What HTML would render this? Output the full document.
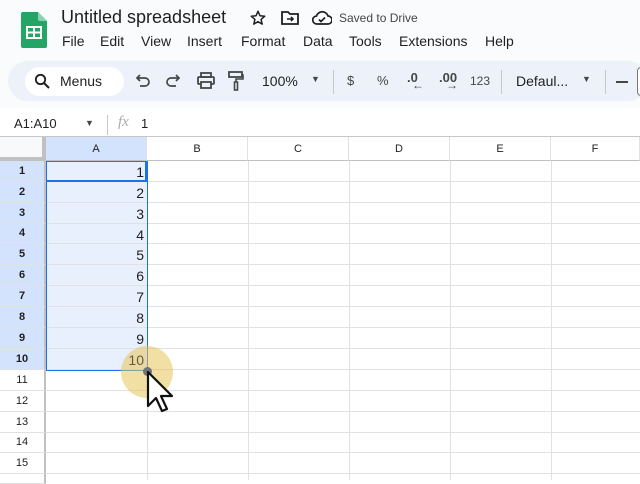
<!DOCTYPE html>
<html><head><meta charset="utf-8"><style>
*{margin:0;padding:0;box-sizing:border-box}
body{width:640px;height:480px;overflow:hidden;background:#fff;font-family:"Liberation Sans",Arial,sans-serif;position:relative;color:#1f1f1f}
.abs{position:absolute}
.top{left:0;top:0;width:640px;height:108px;background:#f9fbfd}
.title{left:61px;top:7px;font-size:18px;color:#1f1f1f}
.menu{top:33px;font-size:14px;color:#1f1f1f}
.tb{left:8px;top:61px;width:640px;height:40px;background:#edf2fa;border-radius:20px}
.search{left:25px;top:67px;width:99px;height:29px;background:#fff;border-radius:15px}
.ti{top:72px;font-size:14px;color:#444746}
.sep{width:1px;height:24px;background:#c7c7c7;top:70px}
.ch{top:137px;height:24px;border-right:1px solid #e1e1e1;border-bottom:1px solid #c0c0c0;font-size:11px;text-align:center;line-height:24px;color:#1f1f1f;background:#fff}
.rh{left:0;width:46px;border-bottom:1px solid #e1e1e1;border-right:2px solid #c0c0c0;font-size:11px;text-align:center;color:#1f1f1f;font-weight:bold;background:#d3e3fd}
.row{left:46px;width:594px;border-bottom:1px solid #e1e1e1}
.vl{top:161px;width:1px;height:319px;background:#e1e1e1}
.num{left:46px;width:98px;text-align:right;font-size:14px;color:#1f1f1f}
</style></head><body>
<div class="abs top"></div>
<svg class="abs" style="left:21px;top:12px" width="26" height="36" viewBox="0 0 26 36"><path d="M2 0h15l9 9v25a2 2 0 0 1-2 2H2a2 2 0 0 1-2-2V2a2 2 0 0 1 2-2z" fill="#23a566"/><path d="M17 0v7a2 2 0 0 0 2 2h7z" fill="#8ed1b1"/><rect x="6" y="15" width="14" height="11" fill="none" stroke="#fff" stroke-width="2"/><line x1="6" y1="20.5" x2="20" y2="20.5" stroke="#fff" stroke-width="2"/><line x1="13" y1="15" x2="13" y2="26" stroke="#fff" stroke-width="2"/></svg>
<div class="abs title">Untitled spreadsheet</div>
<svg class="abs" style="left:249px;top:9px" width="18" height="18" viewBox="0 0 24 24"><path d="M12 3l2.6 6 6.4.6-4.9 4.3 1.5 6.3L12 16.9 6.4 20.2l1.5-6.3L3 9.6 9.4 9z" fill="none" stroke="#1f1f1f" stroke-width="2" stroke-linejoin="round"/></svg>
<svg class="abs" style="left:281px;top:10px" width="18" height="16" viewBox="0 0 18 16"><path d="M1 2h6l2 2h8v10H1z" fill="none" stroke="#1f1f1f" stroke-width="1.8"/><path d="M6 9h6M10 7l2 2-2 2" fill="none" stroke="#1f1f1f" stroke-width="1.6"/></svg>
<svg class="abs" style="left:312px;top:10px" width="20" height="16" viewBox="0 0 20 16"><path d="M5 14a4 4 0 0 1-.5-8A6 6 0 0 1 16 6a4 4 0 0 1 0 8z" fill="none" stroke="#1f1f1f" stroke-width="1.7"/><path d="M7 9.5l2 2 4-4" fill="none" stroke="#1f1f1f" stroke-width="1.7"/></svg>
<div class="abs" style="left:339px;top:11px;font-size:12px;color:#444746">Saved to Drive</div>
<div class="abs menu" style="left:62px">File</div>
<div class="abs menu" style="left:100px">Edit</div>
<div class="abs menu" style="left:141px">View</div>
<div class="abs menu" style="left:187px">Insert</div>
<div class="abs menu" style="left:241px">Format</div>
<div class="abs menu" style="left:303px">Data</div>
<div class="abs menu" style="left:349px">Tools</div>
<div class="abs menu" style="left:399px">Extensions</div>
<div class="abs menu" style="left:485px">Help</div>
<div class="abs tb"></div>
<div class="abs search"></div>
<svg class="abs" style="left:34px;top:73px" width="16" height="16" viewBox="0 0 16 16"><circle cx="6.5" cy="6.5" r="4.7" fill="none" stroke="#1f1f1f" stroke-width="1.8"/><line x1="10" y1="10" x2="15" y2="15" stroke="#1f1f1f" stroke-width="2"/></svg>
<div class="abs ti" style="left:60px;top:73px;color:#1f1f1f">Menus</div>
<svg class="abs" style="left:136px;top:74px" width="14" height="14" viewBox="0 0 14 14"><path d="M4 1L1 4l3 3M1 4h8a4 4 0 0 1 0 8H4" fill="none" stroke="#444746" stroke-width="1.7"/></svg>
<svg class="abs" style="left:166px;top:74px" width="14" height="14" viewBox="0 0 14 14"><path d="M10 1l3 3-3 3M13 4H5a4 4 0 0 0 0 8h5" fill="none" stroke="#444746" stroke-width="1.7"/></svg>
<svg class="abs" style="left:197px;top:72px" width="18" height="17" viewBox="0 0 18 17"><rect x="4" y="1" width="10" height="4" fill="none" stroke="#444746" stroke-width="1.8"/><rect x="1" y="5" width="16" height="7" rx="1" fill="none" stroke="#444746" stroke-width="1.8"/><rect x="4" y="10" width="10" height="6" fill="#edf2fa" stroke="#444746" stroke-width="1.8"/></svg>
<svg class="abs" style="left:228px;top:71px" width="16" height="20" viewBox="0 0 16 20"><rect x="1" y="1" width="13" height="5" fill="none" stroke="#444746" stroke-width="1.8"/><path d="M14 4h1v4H8v3" fill="none" stroke="#444746" stroke-width="1.6"/><rect x="6.5" y="11" width="3" height="8" fill="none" stroke="#444746" stroke-width="1.6"/></svg>
<div class="abs ti" style="left:262px;top:73px;color:#1f1f1f">100%</div>
<div class="abs ti" style="left:311px;top:74px;font-size:9px">&#9660;</div>
<div class="abs sep" style="left:333px"></div>
<div class="abs ti" style="left:347px;top:73px;font-size:13px">$</div>
<div class="abs ti" style="left:377px;top:73px;font-size:13px">%</div>
<div class="abs ti" style="left:407px;top:70px;font-size:13px;font-weight:bold">.0</div>
<div class="abs ti" style="left:412px;top:78px;font-size:12px;font-weight:bold">&#8592;</div>
<div class="abs ti" style="left:439px;top:70px;font-size:13px;font-weight:bold">.00</div>
<div class="abs ti" style="left:446px;top:78px;font-size:12px;font-weight:bold">&#8594;</div>
<div class="abs ti" style="left:470px;top:74px;font-size:12px">123</div>
<div class="abs sep" style="left:501px"></div>
<div class="abs ti" style="left:516px;top:73px;color:#1f1f1f">Defaul...</div>
<div class="abs ti" style="left:582px;top:74px;font-size:9px">&#9660;</div>
<div class="abs sep" style="left:605px"></div>
<div class="abs" style="left:616px;top:81px;width:12px;height:2px;background:#444746"></div>
<div class="abs" style="left:637px;top:67px;width:8px;height:29px;border:1px solid #747775;border-radius:4px;background:#fff"></div>
<div class="abs" style="left:14px;top:116px;font-size:13px">A1:A10</div>
<div class="abs" style="left:85px;top:118px;font-size:9px;color:#444746">&#9660;</div>
<div class="abs" style="left:107px;top:115px;width:1px;height:20px;background:#c7c7c7"></div>
<div class="abs" style="left:118px;top:114px;font-size:15px;font-style:italic;font-family:'Liberation Serif',serif;color:#aaa">fx</div>
<div class="abs" style="left:141px;top:116px;font-size:13px">1</div>
<div class="abs" style="left:0;top:136px;width:640px;height:1px;background:#c7c7c7"></div>
<div class="abs" style="left:0;top:137px;width:46px;height:24px;background:#f8f9fa;border-right:4px solid #c0c0c0;border-bottom:4px solid #c0c0c0"></div>
<div class="abs ch" style="left:46px;width:101px;background:#d3e3fd">A</div>
<div class="abs ch" style="left:147px;width:101px">B</div>
<div class="abs ch" style="left:248px;width:101px">C</div>
<div class="abs ch" style="left:349px;width:101px">D</div>
<div class="abs ch" style="left:450px;width:101px">E</div>
<div class="abs ch" style="left:551px;width:89px">F</div>
<div class="abs" style="left:46px;top:161px;width:101px;height:210px;background:#e8f0fd"></div>
<div class="abs vl" style="left:147px"></div>
<div class="abs vl" style="left:248px"></div>
<div class="abs vl" style="left:349px"></div>
<div class="abs vl" style="left:450px"></div>
<div class="abs vl" style="left:551px"></div>

<div class="abs rh" style="top:161px;height:21px;line-height:20px">1</div><div class="abs row" style="top:161px;height:21px"></div><div class="abs num" style="top:164px">1</div>
<div class="abs rh" style="top:182px;height:21px;line-height:20px">2</div><div class="abs row" style="top:182px;height:21px"></div><div class="abs num" style="top:185px">2</div>
<div class="abs rh" style="top:203px;height:21px;line-height:20px">3</div><div class="abs row" style="top:203px;height:21px"></div><div class="abs num" style="top:206px">3</div>
<div class="abs rh" style="top:224px;height:20px;line-height:19px">4</div><div class="abs row" style="top:224px;height:20px"></div><div class="abs num" style="top:227px">4</div>
<div class="abs rh" style="top:244px;height:21px;line-height:20px">5</div><div class="abs row" style="top:244px;height:21px"></div><div class="abs num" style="top:247px">5</div>
<div class="abs rh" style="top:265px;height:21px;line-height:20px">6</div><div class="abs row" style="top:265px;height:21px"></div><div class="abs num" style="top:268px">6</div>
<div class="abs rh" style="top:286px;height:21px;line-height:20px">7</div><div class="abs row" style="top:286px;height:21px"></div><div class="abs num" style="top:289px">7</div>
<div class="abs rh" style="top:307px;height:21px;line-height:20px">8</div><div class="abs row" style="top:307px;height:21px"></div><div class="abs num" style="top:310px">8</div>
<div class="abs rh" style="top:328px;height:21px;line-height:20px">9</div><div class="abs row" style="top:328px;height:21px"></div><div class="abs num" style="top:331px">9</div>
<div class="abs rh" style="top:349px;height:21px;line-height:20px">10</div><div class="abs row" style="top:349px;height:21px"></div>
<div class="abs rh" style="top:370px;height:21px;line-height:20px;background:#fff;font-weight:normal">11</div><div class="abs row" style="top:370px;height:21px"></div>
<div class="abs rh" style="top:391px;height:21px;line-height:20px;background:#fff;font-weight:normal">12</div><div class="abs row" style="top:391px;height:21px"></div>
<div class="abs rh" style="top:412px;height:21px;line-height:20px;background:#fff;font-weight:normal">13</div><div class="abs row" style="top:412px;height:21px"></div>
<div class="abs rh" style="top:433px;height:20px;line-height:19px;background:#fff;font-weight:normal">14</div><div class="abs row" style="top:433px;height:20px"></div>
<div class="abs rh" style="top:453px;height:21px;line-height:20px;background:#fff;font-weight:normal">15</div><div class="abs row" style="top:453px;height:21px"></div>
<div class="abs rh" style="top:474px;height:10px;background:#fff"></div>

<div class="abs" style="left:46px;top:161px;width:102px;height:210px;border:1px solid #1a73e8"></div>
<div class="abs" style="left:46px;top:161px;width:101px;height:21px;border:2px solid #1a73e8;border-top:none;border-left:none"></div>
<div class="abs" style="left:121px;top:346px;width:52px;height:52px;border-radius:50%;background:rgba(232,196,90,0.55)"></div>
<div class="abs num" style="top:352px;color:#6b5a3a">10</div>
<div class="abs" style="left:143px;top:367px;width:9px;height:9px;border-radius:50%;background:#6f7378"></div>
<svg class="abs" style="left:145px;top:370px" width="32" height="44" viewBox="0 0 32 44"><path d="M3 2v34l8-8 6 13 5-2-6-13h11z" fill="#fff" stroke="#111" stroke-width="2.2" stroke-linejoin="round"/></svg>
</body></html>
